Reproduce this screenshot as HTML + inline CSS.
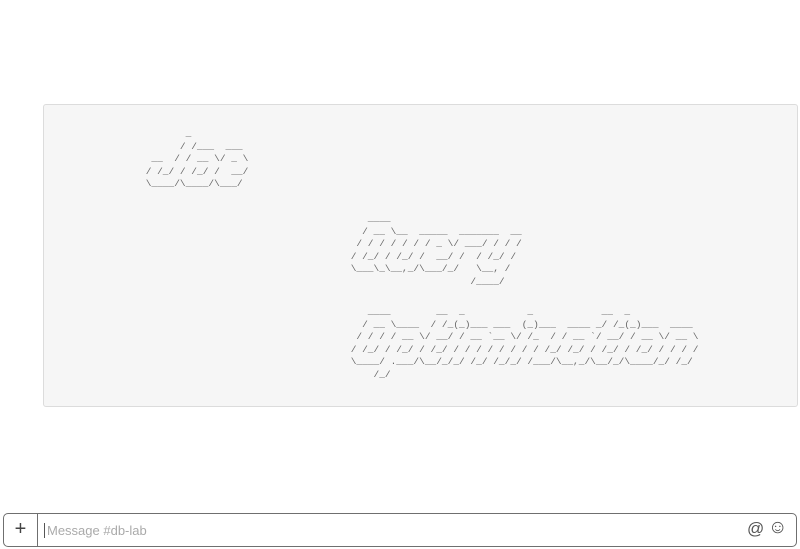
<!DOCTYPE html>
<html><head><meta charset="utf-8"><style>
html,body{margin:0;padding:0;background:#fff;width:800px;height:549px;overflow:hidden;font-family:"Liberation Sans",sans-serif;}
.panel{position:absolute;left:43px;top:104px;width:753px;height:301px;background:#f6f6f6;border:1px solid #dcdcdc;border-radius:3px;}
pre{position:absolute;margin:0;font-family:"Liberation Mono",monospace;font-size:9.5px;line-height:12.6px;color:#666;}
.box{position:absolute;left:3px;top:513px;width:792px;height:32px;border:1.5px solid #6f6f6f;border-radius:5px;background:#fff;}
.plus{position:absolute;left:0;top:0;width:33px;height:32px;border-right:1.5px solid #6f6f6f;font-size:20px;color:#444;text-align:center;line-height:31px;}
.ph{position:absolute;left:40px;top:9px;font-size:13px;color:#aaa;border-left:1px solid #555;padding-left:2px;line-height:15px;}
.ic{position:absolute;top:5px;font-size:17px;color:#555;}
</style></head><body>
<div class="panel"></div>
<pre style="left:140px;top:128px">        _
       / /___  ___
  __  / / __ \/ _ \
 / /_/ / /_/ /  __/
 \____/\____/\___/</pre>
<pre style="left:345px;top:213px">    ____
   / __ \__  _____  _______  __
  / / / / / / / _ \/ ___/ / / /
 / /_/ / /_/ /  __/ /  / /_/ /
 \___\_\__,_/\___/_/   \__, /
                      /____/</pre>
<pre style="left:345px;top:306px">    ____        __  _           _            __  _
   / __ \____  / /_(_)___ ___  (_)___  ____ _/ /_(_)___  ____
  / / / / __ \/ __/ / __ `__ \/ /_  / / __ `/ __/ / __ \/ __ \
 / /_/ / /_/ / /_/ / / / / / / / / /_/ /_/ / /_/ / /_/ / / / /
 \____/ .___/\__/_/_/ /_/ /_/_/ /___/\__,_/\__/_/\____/_/ /_/
     /_/</pre>
<div class="box">
<div class="plus">+</div>
<div class="ph">Message #db-lab</div>
<div class="ic" style="left:743px">@</div>
<div class="ic" style="left:764px;font-size:19px;top:3px">☺</div>
</div>
</body></html>
